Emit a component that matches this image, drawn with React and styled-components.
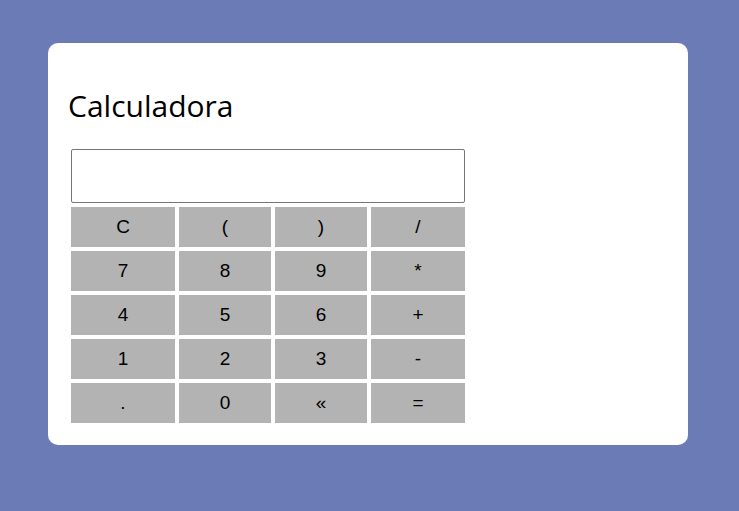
import React from "react";
import styled, { createGlobalStyle } from "styled-components";

const GlobalStyle = createGlobalStyle`
  body {
    margin: 0;
    background: #6a7bb6;
    font-family: "Liberation Sans", Arial, sans-serif;
  }
`;

const keys = [
  ["C", "(", ")", "/"],
  ["7", "8", "9", "*"],
  ["4", "5", "6", "+"],
  ["1", "2", "3", "-"],
  [".", "0", "«", "="],
];

const App = () => {
  return (
    <Page>
      <GlobalStyle />
      <Card>
        <Title>Calculadora</Title>
        <Pad>
          <Display />
          {keys.flat().map((k, i) => (
            <Key key={i}>{k}</Key>
          ))}
        </Pad>
      </Card>
    </Page>
  );
};

export default App;

const Page = styled.div`
  width: 739px;
  height: 511px;
  padding: 43px 0 0 48px;
  box-sizing: border-box;
`;

const Card = styled.div`
  width: 640px;
  height: 402px;
  box-sizing: border-box;
  background: #fff;
  border-radius: 10px;
  padding: 42px 20px 0 20px;
`;

const Title = styled.h1`
  margin: 0 0 23px 0;
  font-family: "Open Sans", sans-serif;
  font-weight: 400;
  font-size: 30px;
  color: #000;
`;

const Pad = styled.div`
  display: grid;
  grid-template-columns: 104px 92px 92px 94px;
  grid-template-rows: 54px repeat(5, 40px);
  gap: 4px;
  margin-left: 3px;
  width: 394px;
`;

const Display = styled.div`
  grid-column: 1 / -1;
  box-sizing: border-box;
  border: 1px solid #767676;
  border-radius: 2px;
  background: #fff;
`;

const Key = styled.div`
  display: flex;
  align-items: center;
  justify-content: center;
  background: #b3b3b3;
  font-size: 19px;
  color: #000;
`;
